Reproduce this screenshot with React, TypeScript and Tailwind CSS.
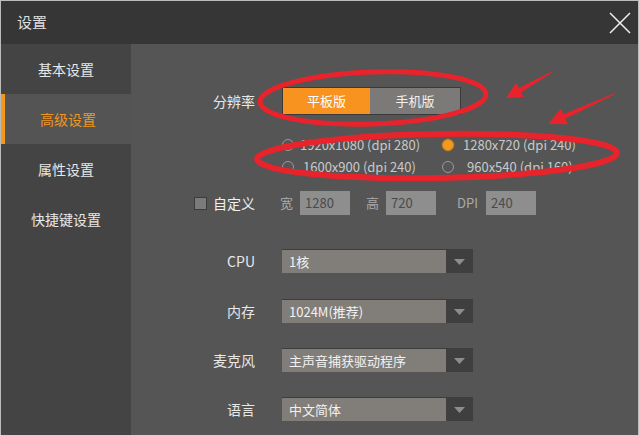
import React from "react";

const FONT = { fontFamily: '"Noto Sans CJK SC", "Noto Sans", sans-serif' };

const menu = ["基本设置", "高级设置", "属性设置", "快捷键设置"];

const radios = [
  { label: "1920x1080 (dpi 280)", checked: false, gap: "ml-[6px]" },
  { label: "1280x720 (dpi 240)", checked: true, gap: "ml-[9px]" },
  { label: "1600x900 (dpi 240)", checked: false, gap: "ml-[9px]" },
  { label: "960x540 (dpi 160)", checked: false, gap: "ml-[13px]" },
];

const selects = [
  { label: "CPU", value: "1核", mt: "mt-[34px]" },
  { label: "内存", value: "1024M(推荐)", mt: "mt-[26px]" },
  { label: "麦克风", value: "主声音捕获驱动程序", mt: "mt-[25px]" },
  { label: "语言", value: "中文简体", mt: "mt-[25px]" },
];

const Radio = ({ label, checked, gap }: { label: string; checked: boolean; gap: string }) => (
  <div className="flex items-center w-[160px] h-[22px]">
    <span
      className={
        checked
          ? "w-[12px] h-[12px] rounded-full border border-[#c98a2c] bg-[#f39a1e] shadow-[0_0_0_1px_#6b5a3e]"
          : "w-[12px] h-[12px] rounded-full border border-[#9a9a9a]"
      }
    />
    <span className={gap + " text-[13px] text-[#c9c9c9]"}>{label}</span>
  </div>
);

const Select = ({ value }: { value: string }) => (
  <div className="flex w-[191px] h-[24px] border-t border-[#3d3d3d]">
    <div className="flex-1 bg-[#817e7a] flex items-center pl-[7px] text-[13px] text-[#f2f2f2]">{value}</div>
    <div className="w-[27px] bg-[#3f3f3f] flex items-center justify-center">
      <svg width="11" height="6" viewBox="0 0 11 6">
        <path d="M0 0h11L5.5 6z" fill="#8d8d8d" />
      </svg>
    </div>
  </div>
);

const Field = ({ value }: { value: string }) => (
  <div className="w-[50px] h-[24px] bg-[#8e8e8e] flex items-center pl-[5px] text-[13px] text-[#4a4a4a]">{value}</div>
);

export default function App() {
  return (
    <div className="relative w-[639px] h-[435px] overflow-hidden bg-[#555555] border-t border-x border-[#bcbcbc] flex flex-col" style={FONT}>
      {/* Title bar */}
      <div className="h-[43px] bg-[#363636] flex items-center justify-between pl-[16px] pr-[6px] shrink-0">
        <span className="text-[15px] text-[#dedede]">设置</span>
        <svg width="22" height="22" viewBox="0 0 22 22" className="mr-[1px]">
          <path d="M1 1L21 21M21 1L1 21" stroke="#f0f0f0" strokeWidth="1.5" />
        </svg>
      </div>

      <div className="flex flex-1">
        {/* Sidebar */}
        <div className="w-[130px] bg-[#444444] flex flex-col">
          {menu.map((m, i) => (
            <div
              key={m}
              className={
                i === 1
                  ? "h-[50px] flex items-center justify-center bg-[#545454] border-l-[4px] border-[#f39a1e] text-[14px] text-[#f0961e]"
                  : "h-[50px] flex items-center justify-center text-[14px] text-[#e8e8e8]"
              }
            >
              {m}
            </div>
          ))}
        </div>

        {/* Content */}
        <div className="flex-1 flex flex-col pt-[43px]">
          <div className="flex items-center">
            <div className="w-[124px] text-right text-[14px] text-[#e8e8e8]">分辨率</div>
            <div className="ml-[27px] flex h-[28px] border border-[#3a3a3a]">
              <div className="w-[87px] bg-[#f7931e] flex items-center justify-center text-[13px] text-white">平板版</div>
              <div className="w-[90px] bg-[#7c7a78] flex items-center justify-center text-[13px] text-[#f0f0f0]">手机版</div>
            </div>
          </div>

          <div className="ml-[151px] mt-[19px] grid grid-cols-[160px_160px]">
            {radios.map((r) => (
              <Radio key={r.label} {...r} />
            ))}
          </div>

          <div className="flex items-center mt-[13px]">
            <div className="w-[124px] flex items-center justify-end">
              <span className="w-[13px] h-[13px] bg-[#7b7b7b] border border-[#3c3c3c]" />
              <span className="ml-[6px] text-[14px] text-[#f0f0f0]">自定义</span>
            </div>
            <span className="ml-[25px] text-[13px] text-[#aaaaaa]">宽</span>
            <div className="ml-[7px]"><Field value="1280" /></div>
            <span className="ml-[16px] text-[13px] text-[#aaaaaa]">高</span>
            <div className="ml-[7px]"><Field value="720" /></div>
            <span className="ml-[21px] text-[13px] text-[#aaaaaa]">DPI</span>
            <div className="ml-[8px]"><Field value="240" /></div>
          </div>

          {selects.map((s) => (
            <div key={s.label} className={"flex items-center " + s.mt}>
              <div className="w-[124px] text-right text-[14px] text-[#e8e8e8]">{s.label}</div>
              <div className="ml-[27px]">
                <Select value={s.value} />
              </div>
            </div>
          ))}
        </div>
      </div>

      {/* Red hand-drawn annotations */}
      <svg className="absolute left-0 top-0 pointer-events-none" width="639" height="435" viewBox="0 0 639 435">
        <ellipse cx="372" cy="97" rx="113" ry="26" fill="none" stroke="#e8232b" strokeWidth="5" transform="rotate(-2 372 97)" />
        <ellipse cx="436" cy="155" rx="180" ry="22" fill="none" stroke="#e8232b" strokeWidth="6" transform="rotate(-1 436 155)" />
        <polygon
          points="550.8,70.6 517.7,86.9 515,82.1 505,97 522.8,96.1 520.1,91.3 551.2,71.4"
          fill="#e8232b"
        />
        <polygon
          points="612.8,92.5 562.4,113.2 559.9,107.8 547,123 566.9,123.2 564.4,117.8 613.2,93.5"
          fill="#e8232b"
        />
      </svg>
    </div>
  );
}
